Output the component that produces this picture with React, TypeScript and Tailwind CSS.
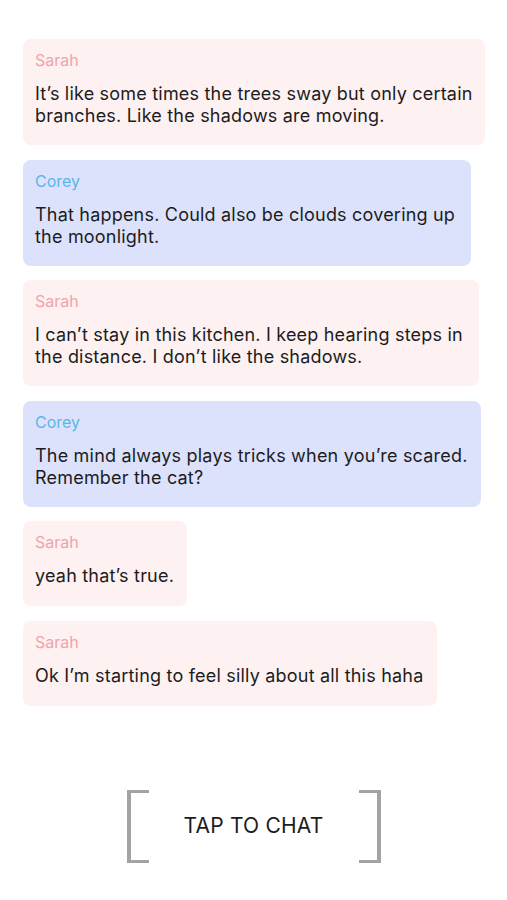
import React from 'react';

type Message = {
  from: 'Sarah' | 'Corey';
  lines: string[];
  width: string;
};

const messages: Message[] = [
  {
    from: 'Sarah',
    lines: ['It’s like some times the trees sway but only certain', 'branches. Like the shadows are moving.'],
    width: 'w-[462px]',
  },
  {
    from: 'Corey',
    lines: ['That happens. Could also be clouds covering up', 'the moonlight.'],
    width: 'w-[448px]',
  },
  {
    from: 'Sarah',
    lines: ['I can’t stay in this kitchen. I keep hearing steps in', 'the distance. I don’t like the shadows.'],
    width: 'w-[456px]',
  },
  {
    from: 'Corey',
    lines: ['The mind always plays tricks when you’re scared.', 'Remember the cat?'],
    width: 'w-[458px]',
  },
  { from: 'Sarah', lines: ['yeah that’s true.'], width: 'w-[164px]' },
  { from: 'Sarah', lines: ['Ok I’m starting to feel silly about all this haha'], width: 'w-[414px]' },
];

function Bubble({ msg }: { msg: Message }) {
  const isSarah = msg.from === 'Sarah';
  // single-line bubbles sit a touch taller at the bottom
  const pad = msg.lines.length > 1 ? 'pb-[18px]' : 'pb-[19px]';
  return (
    <div
      className={`${msg.width} rounded-lg px-3 pt-[11px] ${pad} ${isSarah ? 'bg-[#fdf1f1]' : 'bg-[#dce2fc]'}`}
    >
      <div className={`text-[16px] leading-[20px] ${isSarah ? 'text-[#f2a3ab]' : 'text-[#5bb5e8]'}`}>
        {msg.from}
      </div>
      <div className="mt-[13px] text-[18px] leading-[22px] tracking-[0.2px] text-[#1c1c1e] whitespace-nowrap">
        {msg.lines.map((line, i) => (
          <div key={i}>{line}</div>
        ))}
      </div>
    </div>
  );
}

// Square bracket drawn with borders
function Bracket({ side }: { side: 'left' | 'right' }) {
  return (
    <div
      className={`h-[73px] w-[22px] border-y-[3px] border-[#a3a3a3] ${
        side === 'left' ? 'border-l-[4px]' : 'border-r-[4px]'
      }`}
    />
  );
}

export default function App() {
  return (
    <div className="min-h-[900px] w-[507px] bg-white font-['Inter','Liberation_Sans',sans-serif] flex flex-col">
      <div className="flex flex-col gap-[14.5px] pl-[23px] pt-[39px]">
        {messages.map((m, i) => (
          <Bubble key={i} msg={m} />
        ))}
      </div>

      <button className="mt-[84px] mx-auto flex items-center">
        <Bracket side="left" />
        <span className="w-[210px] text-center text-[21px] text-[#1c1c1e] tracking-[0.2px]">TAP TO CHAT</span>
        <Bracket side="right" />
      </button>
    </div>
  );
}
